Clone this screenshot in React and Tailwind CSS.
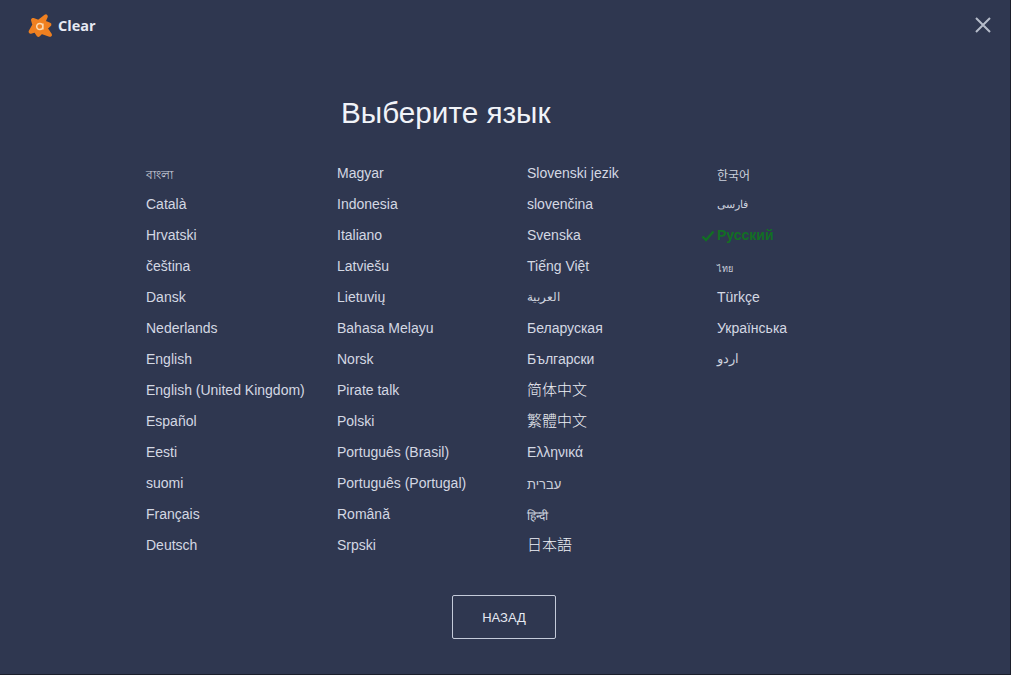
const cols = [
  ["বাংলা","Català","Hrvatski","čeština","Dansk","Nederlands","English","English (United Kingdom)","Español","Eesti","suomi","Français","Deutsch"],
  ["Magyar","Indonesia","Italiano","Latviešu","Lietuvių","Bahasa Melayu","Norsk","Pirate talk","Polski","Português (Brasil)","Português (Portugal)","Română","Srpski"],
  ["Slovenski jezik","slovenčina","Svenska","Tiếng Việt","العربية","Беларуская","Български","简体中文","繁體中文","Ελληνικά","עברית","हिन्दी","日本語"],
  ["한국어","فارسی","Русский","ไทย","Türkçe","Українська","اردو"],
];
const special = {
  "বাংলা": "text-[11.5px] pt-[4px] text-[#ccd1dd]",
  "한국어": "text-[12px] pt-[5px] text-[#ccd1dd]",
  "فارسی": "text-[11px] text-[#ccd1dd]",
  "ไทย": "text-[9px] pt-[6px] text-[#ccd1dd]",
  "اردو": "text-[12.5px] text-[#ccd1dd]",
  "العربية": "text-[11.5px] text-[#ccd1dd]",
  "हिन्दी": "text-[12px] pt-[2px] text-[#ccd1dd]",
  "简体中文": "text-[15px] font-light text-[#eef0f6]",
  "繁體中文": "text-[15px] font-light text-[#eef0f6]",
  "日本語": "text-[15px] font-light text-[#eef0f6]",
  "עברית": "text-[13px] pt-[2px] text-[#ccd1dd]",
};

export default function App() {
  return (
    <div className="w-[1011px] h-[675px] bg-[#2f3750] overflow-hidden flex flex-col border-r border-b border-[#1b1f2c] font-['Liberation_Sans','Noto_Sans_CJK_SC',sans-serif] text-[#d4d8e3]">
      <header className="h-[52px] flex items-center justify-between pl-[27px] pr-[18px] shrink-0">
        <div className="flex items-center gap-[5px]">
          <svg width="26" height="26" viewBox="0 0 26 26">
            <path d="M18.8 3.4 16.4 9 22.4 11.6 18.4 15.2 23 21.8 14.4 18.8 11.4 21.8 8.4 17.4 3.6 18.8 7.4 12 6 7 11.4 9Z" fill="#f08020" stroke="#f08020" strokeWidth="4" strokeLinejoin="round" />
            <path d="M12.8 10.4a3.1 3.1 0 1 0 0 6.2 3.1 3.1 0 0 0 0-6.2z M15.9 10.4v6.2" fill="none" stroke="#fbd9b0" strokeWidth="1.5" />
          </svg>
          <span className="text-[14.5px] font-bold font-['Open_Sans',sans-serif] text-[#e6e9f2]">Clear</span>
        </div>
        <svg width="18" height="18" viewBox="0 0 18 18" className="mb-[2px]">
          <path d="M2 2l14 14M16 2L2 16" stroke="#b6bcca" strokeWidth="2" />
        </svg>
      </header>
      <h1 className="text-[29.7px] leading-[34px] mt-[44px] ml-[341px] text-[#f1f3f8] whitespace-nowrap">Выберите язык</h1>
      <div className="grid grid-cols-[191px_190px_190px_190px] ml-[146px] mt-[28px]">
        {cols.map((col, i) => (
          <ul key={i} className="flex flex-col">
            {col.map((l) => {
              const active = l === "Русский";
              return (
                <li key={l} className={`relative h-[31px] flex items-center whitespace-nowrap ${active ? "text-[14px] font-bold text-[#126f24]" : special[l] || "text-[14px] text-[#d4d8e3]"}`}>
                  {active && (
                    <svg width="14" height="12" viewBox="0 0 14 12" className="absolute left-[-16px] top-[10px]">
                      <path d="M1.5 6.5l3.5 3.5 7.5-8.5" fill="none" stroke="#126f24" strokeWidth="2.4" />
                    </svg>
                  )}
                  {l}
                </li>
              );
            })}
          </ul>
        ))}
      </div>
      <button className="w-[104px] h-[44px] ml-[452px] mt-[34px] pt-[1px] rounded-[2px] border border-[#c4cad9] text-[13px] text-[#e6e9f2]">НАЗАД</button>
    </div>
  );
}
